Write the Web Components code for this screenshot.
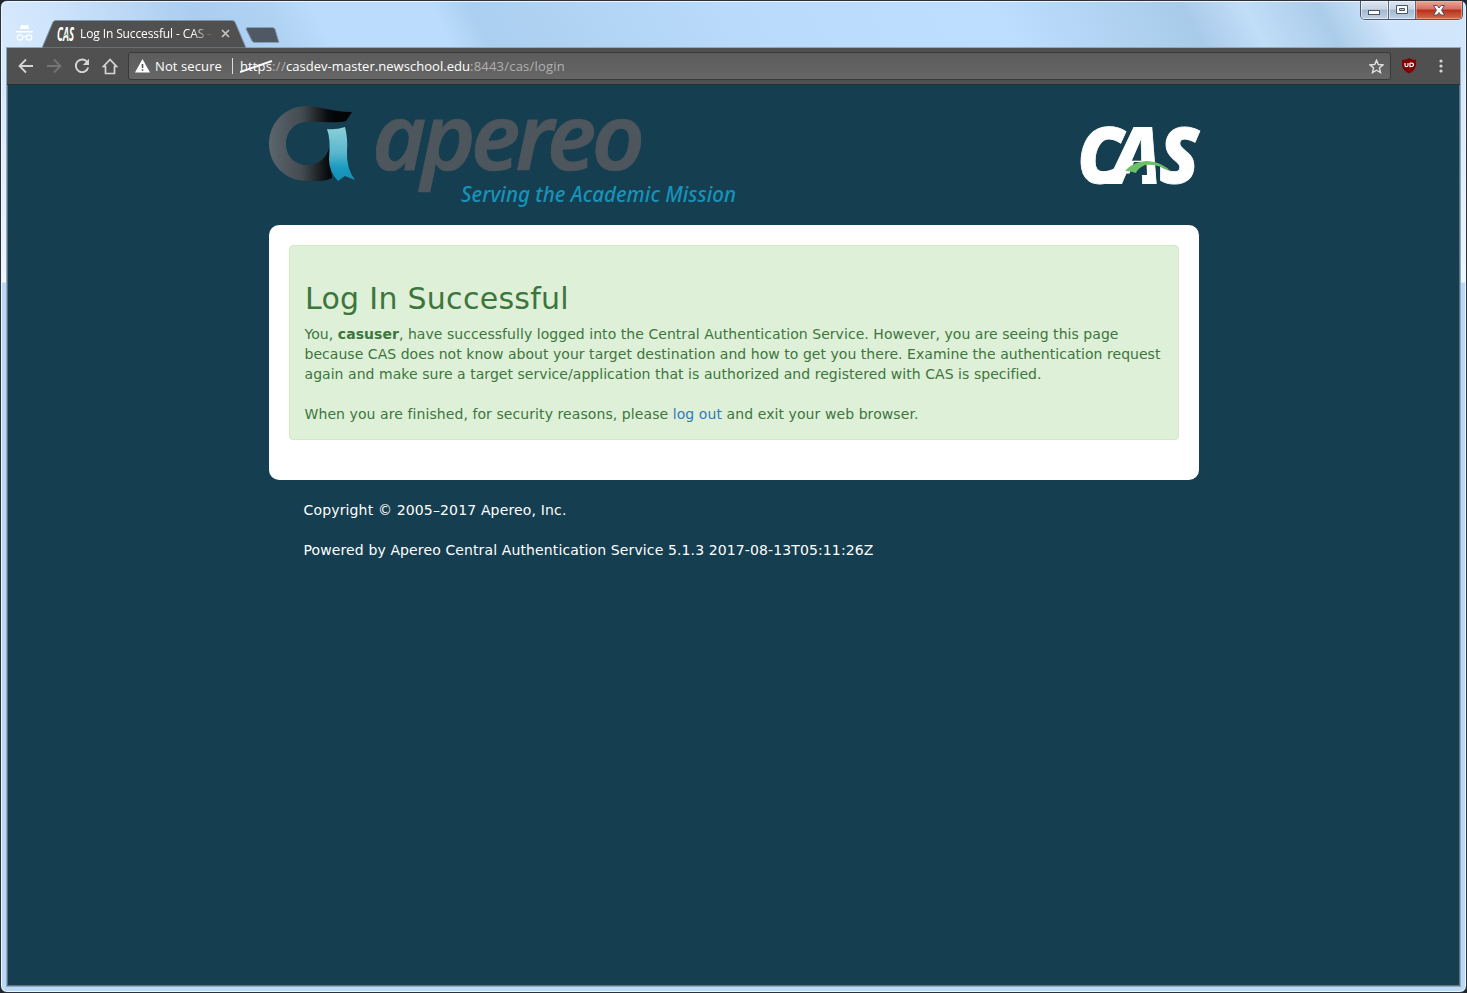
<!DOCTYPE html>
<html lang="en"><head><meta charset="utf-8"><title>Log In Successful - CAS</title>
<style>html,body{margin:0;height:993px;overflow:hidden;background:#20242b}</style></head><body>
<browser-window>
  <title-bar slot="title"></title-bar>
  <tool-bar slot="tools"></tool-bar>
  <cas-page slot="page"></cas-page>
</browser-window>
<script>
const define=(name,html,after)=>customElements.define(name,class extends HTMLElement{
  connectedCallback(){ if(this.shadowRoot)return; this.attachShadow({mode:'open'}).innerHTML=html; if(after)after(this); }
});

/* One line of text, tracked so that it fills the width given by its "w" attribute. */
define('fit-line','<style>:host{display:block;white-space:pre}span{display:inline-block}</style><span><slot></slot></span>',el=>{
  const s=el.shadowRoot.querySelector('span'),n=el.textContent.length;
  s.style.letterSpacing=((+el.getAttribute('w')-s.getBoundingClientRect().width)/n)+'px';
});

define('cas-logo',`<style>:host{display:block;width:119px;height:61px}svg{display:block;overflow:visible}
text{font:italic 800 78px "Open Sans","Noto Sans",sans-serif;fill:#fff;stroke:#fff;stroke-width:.8px}</style>
<svg width="119" height="61" viewBox="0 0 119 61">
<text transform="translate(0 58) scale(.94 1)" x="-3 33.500 84" y="0">CAS</text>
<path d="M54 37H66.500L67 50H49z" fill="#153e50"/>
<path d="M45 46Q54 36 67 36Q83 37 91 47Q77 38 65 40Q58 43 56 48Q51 46 45 46z" fill="#6cc067"/></svg>`);

define('apereo-logo',`<style>:host{display:block;width:468px;height:101px}svg{display:block;overflow:visible}
.n{font:italic 600 92px "Noto Sans","Open Sans",sans-serif;fill:#4d565c;letter-spacing:-5px;stroke:#4d565c;stroke-width:.7px}
.t{font:italic 500 21.500px "Noto Sans","Open Sans",sans-serif;fill:#1792b9}</style>
<svg width="468" height="101" viewBox="0 0 468 101">
<defs><linearGradient id="g" gradientUnits="userSpaceOnUse" x1="0" y1="0" x2="66" y2="0"><stop offset="0" stop-color="#5d666d"/><stop offset=".5" stop-color="#434b51"/><stop offset=".9" stop-color="#080a0c"/><stop offset="1" stop-color="#040506"/></linearGradient>
<linearGradient id="b" x1="0" y1="0" x2="0" y2="1"><stop offset="0" stop-color="#8bd0da"/><stop offset=".5" stop-color="#57b5cb"/><stop offset=".75" stop-color="#1b9bc0"/><stop offset="1" stop-color="#158db5"/></linearGradient></defs>
<path transform="translate(0 -1)" d="M38 1C51 1 62 7 83 7L77 16C67 19 51 16 38 17C26 17 17 26 17 39C17 52 27 60 38 60C50 60 58 52 60 43L63 73C56 77 47 76 38 76C17 76 0 60 0 39C0 17 17 1 38 1z" fill="url(#g)"/>
<path transform="translate(0 -1)" d="M58 24Q67 25 76 22Q79 34 78 46Q77 63 86 75L76 71L69 76Q60 67 60 54Q62 35 58 24z" fill="url(#b)"/>
<text class="n" x="103" y="64" textLength="268" lengthAdjust="spacingAndGlyphs">apereo</text>
<text class="t" x="192" y="95.500" textLength="275" lengthAdjust="spacingAndGlyphs">Serving the Academic Mission</text></svg>`);

define('title-bar',`<style>:host{display:flex;justify-content:space-between;align-items:flex-start;height:47px;font:12px "Open Sans","Noto Sans",sans-serif}
.left{display:flex;height:47px}.spy{padding:23px 0 0 9px;width:26px;box-sizing:content-box}
.tab{display:flex;align-items:center;position:relative;width:205px;height:29px;margin-top:18px}
.tab>svg.bg{position:absolute;left:0;top:0}.tab>*{position:relative}
.fav{margin-left:15px;width:18px;height:18px;overflow:visible}.cap{margin-left:5px;width:133px;overflow:hidden;color:#fff;-webkit-mask:linear-gradient(90deg,#000 112px,transparent 133px)}
.x{margin-left:8px}.new{margin:25px 0 0 -2px}
.ctl{display:flex;height:18px;border:1px solid #4b5668;border-top:0;border-radius:0 0 5px 5px;overflow:hidden;margin-right:-3px;box-shadow:0 1px 1px #eef7}
.ctl i{display:flex;align-items:center;justify-content:center;width:27px;border-right:1px solid #59677d;background:linear-gradient(#dce7f3,#c6d4e4 45%,#a3b8d0 50%,#bed1e6);box-shadow:inset 0 0 0 1px #ffffff88}
.ctl i:first-child svg{margin-top:6px}
.ctl i+i{width:26px}.ctl i:last-child{width:46px;border:0;background:linear-gradient(#e8a798,#d5705d 45%,#b62f1b 50%,#d56d4c);box-shadow:inset 0 0 0 1px #ffb9a488}</style>
<div class="left"><div class="spy"><svg width="17" height="18" viewBox="0 0 17 18"><path d="M5 1h2l1.500.6L10 1h2l1 4H4zM0 7h17v1.500H0z" fill="#fff"/><g fill="none" stroke="#fff" stroke-width="1.200"><circle cx="4" cy="13.500" r="2.700"/><circle cx="13" cy="13.500" r="2.700"/><path d="M6.700 13Q8.500 12 10.300 13"/></g></svg></div>
<div class="tab"><svg class="bg" width="206" height="29"><path d="M0 29L11 3Q12 1.500 14 1.500H190Q192 1.500 193 3L204 29z" fill="#505050" stroke="#7893aa"/></svg>
<svg class="fav" viewBox="0 0 18 18"><text x="0" y="16" font-family="Open Sans" font-size="19" font-weight="700" font-style="italic" fill="#fff" textLength="17" lengthAdjust="spacingAndGlyphs">CAS</text><path d="M6 11Q9 8 13 11" fill="none" stroke="#5ea55b"/></svg>
<div class="cap"><fit-line w="133">Log In Successful - CAS –</fit-line></div>
<svg class="x" width="9" height="9"><path d="M1 1L8 8M8 1L1 8" stroke="#c4c4c4" stroke-width="1.700"/></svg></div>
<svg class="new" width="36" height="18"><path d="M1 3Q1 1.500 3 1.500H27Q29 1.500 30 3L34 16.500H10Q8 16.500 7 15z" fill="#505863" stroke="#7f9fbd"/></svg></div>
<div class="ctl"><i><svg width="13" height="6"><rect x=".5" y=".5" width="11" height="4" fill="#fff" stroke="#4c5566"/></svg></i><i><svg width="13" height="10"><path d="M.5.5h11v8H.5zM3.500 3.500h5v2h-5z" fill="#fff" fill-rule="evenodd" stroke="#4c5566"/></svg></i><i><svg width="12" height="11"><path d="M.5.5h3.500l2 2.500 2-2.500h3.500L8.500 5.200 11.500 10H8L6 7.500 4 10H.5L3.500 5.200z" fill="#fff" stroke="#55555f"/></svg></i></div>`);

define('tool-bar',`<style>:host{display:flex;align-items:center;height:37px;box-sizing:border-box;background:#505050;border-bottom:1px solid #2c2f31;font:13px "Open Sans","Noto Sans",sans-serif;color:#fff}
svg{flex:none}.nav{display:flex;gap:12px;margin-left:11px;align-items:center}
.box{display:flex;align-items:center;box-sizing:border-box;width:1263px;height:28px;margin-left:10px;background:linear-gradient(#5c5c5c,#666);border:1px solid #393939;border-radius:3px;padding-left:6px}
.ns{margin-left:5px}.sep{width:1px;height:16px;background:#ddd;margin:0 7px 0 10px}.url{display:flex}.https{position:relative}.https svg{position:absolute;left:0;top:1px}
.g{color:#b0b0b0}.star{margin-left:auto;margin-right:6px}.shield{margin-left:11px}.dots{margin-left:23px}</style>
<div class="nav"><svg width="16" height="16"><path d="M15 8H2M8 1.500L1.500 8 8 14.500" fill="none" stroke="#d5d5d5" stroke-width="1.800"/></svg>
<svg width="16" height="16"><path d="M1 8H14M8 1.500L14.500 8 8 14.500" fill="none" stroke="#757575" stroke-width="1.800"/></svg>
<svg width="16" height="16"><path d="M13.200 4A6.300 6.300 0 1 0 14.200 9.500" fill="none" stroke="#d5d5d5" stroke-width="1.900"/><path d="M15 .8V7H8.800z" fill="#d5d5d5"/></svg>
<svg width="16" height="17"><path d="M8 1.500L1.500 8.500H3.500V15.500H12.500V8.500H14.500z" fill="none" stroke="#d5d5d5" stroke-width="1.700"/></svg></div>
<div class="box"><svg width="15" height="14"><path d="M7.500 0L15 13.500H0z" fill="#fff"/><path d="M6.700 5h1.600v4H6.700zM6.700 10.200h1.600v1.600H6.700z" fill="#505050"/></svg>
<fit-line class="ns" w="67">Not secure</fit-line><span class="sep"></span>
<div class="url"><div class="https"><fit-line w="32">https</fit-line><svg width="33" height="17"><path d="M0 14L32 3" stroke="#fff" stroke-width="1.900"/></svg></div><fit-line class="g" w="14">://</fit-line><fit-line w="184">casdev-master.newschool.edu</fit-line><fit-line class="g" w="95">:8443/cas/login</fit-line></div>
<svg class="star" width="15" height="15" viewBox="0 0 15 15"><path d="M7.500 1.200L9.300 5.500 14 5.900 10.400 9 11.500 13.600 7.500 11.200 3.500 13.600 4.600 9 1 5.900 5.700 5.500z" fill="none" stroke="#e0e0e0" stroke-width="1.400"/></svg></div>
<svg class="shield" width="14" height="16" viewBox="0 0 14 16"><path d="M7 0Q10 2 14 2V7Q13 13 7 15.500Q1 13 0 7V2Q4 2 7 0z" fill="#800000"/><path d="M3 5v2.200q0 1.500 1.500 1.500t1.500-1.500V5M8 5v3.700q3.500.2 3.500-1.850T8 5" fill="none" stroke="#fff" stroke-width="1.200"/></svg>
<svg class="dots" width="4" height="14"><g fill="#d5d5d5"><circle cx="2" cy="2" r="1.600"/><circle cx="2" cy="7" r="1.600"/><circle cx="2" cy="12" r="1.600"/></g></svg>`);

define('cas-page',`<style>:host{display:block;box-sizing:border-box;height:901px;background:#153e50;border:solid #5f717e;border-width:0 1px 1px;font:14px/20px "DejaVu Sans",Verdana,sans-serif;color:#fff}
main{width:930px;margin-left:261px;padding-top:21px}header{display:flex;justify-content:space-between;height:119px}
cas-logo{margin-top:19px}.card{box-sizing:border-box;height:255px;background:#fff;border-radius:10px;padding:20px}
.alert{box-sizing:border-box;height:195px;background:#dff0d8;border:1px solid #d6e9c6;border-radius:4px;padding:36px 15px 0;color:#3c763d}
h1{font-size:30px;font-weight:400;line-height:33px;margin:0 0 9px}p{margin:0 0 20px}.alert p{margin-left:-.5px}a{color:#337ab7;text-decoration:none}
footer{padding:20px 34.500px}</style>
<main><header><apereo-logo></apereo-logo><cas-logo></cas-logo></header>
<section class="card"><div class="alert"><h1><fit-line w="264">Log In Successful</fit-line></h1>
<p><fit-line w="814">You, <b>casuser</b>, have successfully logged into the Central Authentication Service. However, you are seeing this page</fit-line><fit-line w="856">because CAS does not know about your target destination and how to get you there. Examine the authentication request</fit-line><fit-line w="737">again and make sure a target service/application that is authorized and registered with CAS is specified.</fit-line></p>
<p><fit-line w="614">When you are finished, for security reasons, please <a>log out</a> and exit your web browser.</fit-line></p></div></section>
<footer><p><fit-line w="263">Copyright © 2005–2017 Apereo, Inc.</fit-line></p><p><fit-line w="570">Powered by Apereo Central Authentication Service 5.1.3 2017-08-13T05:11:26Z</fit-line></p></footer></main>`);

define('browser-window',`<style>:host{display:flex;flex-direction:column;box-sizing:border-box;width:1467px;height:993px;border:1px solid #2b323d;border-radius:7px;padding:0 6px 6px;
background:linear-gradient(62deg,#d9eafc 0,#cfe5fc 5%,#abcdf0 15%,#b0d2f3 20%,#bbdcfc 23%,#bbdcfc 31%,#abcff0 33.500%,#b9dafa 50%,#bddefe 68%,#a9cbea 81%,#c1ddf8 85%,#abcdea 90%,#cfe5fb 94%,#d2e7fc) 0 0/100% 70px no-repeat,linear-gradient(#d5e8fb 70px,#f0f6fc 281px,#b9d9f9 282px);box-shadow:inset 0 0 0 1px #eef6ff}
.client{outline:1px solid #8fa9bd}</style><slot name="title"></slot><div class="client"><slot name="tools"></slot><slot name="page"></slot></div>`);
</script></body></html>
